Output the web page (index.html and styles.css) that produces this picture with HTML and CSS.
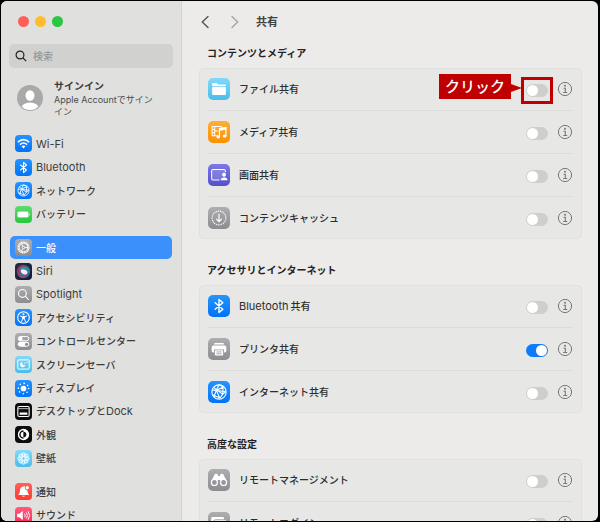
FILE: index.html
```html
<!DOCTYPE html>
<html lang="ja">
<head>
<meta charset="utf-8">
<title>共有</title>
<link rel="stylesheet" href="styles.css">
</head>
<body>
<svg class="defs" aria-hidden="true">
  <symbol id="bluetooth" viewBox="0 0 24 24"><path d="M7.800 8.500l8.400 7-4.200 3.700V4.800l4.200 3.700-8.400 7" fill="none" stroke="#fff" stroke-width="1.500" stroke-linejoin="round" stroke-linecap="round"/></symbol>
  <symbol id="globe" viewBox="0 0 24 24"><g fill="none" stroke="#fff" stroke-width="1.200"><circle cx="12" cy="12" r="7.800"/><path d="M12 4.200l-3 6 4 8.500M4.500 10l4.500.2 8-3.700M6 7l10 7.500 3.500-3M5 15l8 3.500 3-4 .5-8M9 10.200L6.500 17.500M12 4.200l5 2.300M9 10.200l10.500 1.500"/></g></symbol>
  <symbol id="info" viewBox="0 0 16 16"><circle cx="8" cy="8" r="6.600" fill="none" stroke="#777" stroke-width="1"/><circle cx="8" cy="4.800" r="1" fill="#777"/><path d="M6.500 7.200h1.800v4.100M6.200 11.500h4" fill="none" stroke="#777" stroke-width="1.100"/></symbol>
</svg>
<div class="window">
  <aside class="sidebar">
    <div class="lights"><button class="light red" aria-label="閉じる"></button><button class="light yellow" aria-label="しまう"></button><button class="light green-light" aria-label="拡大"></button></div>
    <label class="search">
      <svg viewBox="0 0 12 12"><circle cx="5" cy="5" r="3.900"/><path d="M8 8l3.200 3.200"/></svg>
      <input type="search" placeholder="検索" aria-label="検索">
    </label>
    <a class="account" href="#">
      <svg class="avatar" viewBox="0 0 26 26"><defs><clipPath id="face"><circle cx="13" cy="13" r="12"/></clipPath></defs><circle cx="13" cy="13" r="13" fill="#a9a9a9"/><g clip-path="url(#face)" fill="#fff"><ellipse cx="13" cy="10.500" rx="4.500" ry="5.200"/><ellipse cx="13" cy="23" rx="8.500" ry="5.500"/></g></svg>
      <span><strong>サインイン</strong><small>Apple Accountでサインイン</small></span>
    </a>
    <nav>
      <div class="group group-network">
        <a href="#"><svg class="tile blue" viewBox="0 0 24 24"><path d="M4 10q8-7 16 0M7 13.500q5-4.500 10 0" fill="none" stroke="#fff" stroke-width="2.200"/><path d="M9.300 16q2.700-2.400 5.400 0L12 19z" fill="#fff"/></svg><span class="latin">Wi-Fi</span></a>
        <a href="#"><svg class="tile blue"><use href="#bluetooth"/></svg><span class="latin">Bluetooth</span></a>
        <a href="#"><svg class="tile blue"><use href="#globe"/></svg>ネットワーク</a>
        <a href="#"><svg class="tile green" viewBox="0 0 24 24"><rect x="3" y="7.500" width="16.500" height="9" rx="2.500" fill="#fff" fill-opacity=".55"/><rect x="4" y="8.500" width="14.500" height="7" rx="1.500" fill="#fff"/><path d="M20.500 10q2 2 0 4z" fill="#fff"/></svg>バッテリー</a>
      </div>
      <div class="group group-general">
        <a href="#" class="selected" aria-current="page"><svg class="tile gray" viewBox="0 0 24 24"><circle cx="12" cy="12" r="7.600" fill="none" stroke="#fff" stroke-width="2" stroke-dasharray="1.800 .6"/><g fill="none" stroke="#fff" stroke-width="1.300"><circle cx="12" cy="12" r="6"/><circle cx="12" cy="12" r="1.800"/><path d="M14 12h4M11 10.300L9 6.800M11 13.700l-2 3.500"/></g></svg>一般</a>
        <a href="#"><svg class="tile" viewBox="0 0 24 24"><defs><linearGradient id="siri-bg" x2="1" y2="1"><stop stop-color="#272c3c"/><stop offset="1" stop-color="#161b35"/></linearGradient><linearGradient id="siri-ring" x2="1" y2="1"><stop stop-color="#dc3e7c"/><stop offset=".3" stop-color="#c23b86"/><stop offset=".6" stop-color="#21bac8"/><stop offset="1" stop-color="#3863cc"/></linearGradient></defs><path fill="url(#siri-bg)" d="M0 0h24v24H0z"/><circle cx="12" cy="12" r="9.500" fill="url(#siri-ring)" opacity=".7"/><path d="M4 15q8 5 15-2-3 8-10 7-4-1-5-5" fill="#d12b74" opacity=".8"/><path d="M5 9q5-6 11-3l4 8q-3-6-8-5z" fill="#24aab5" opacity=".7"/><ellipse cx="13" cy="12.500" rx="5" ry="3.200" transform="rotate(25 13 12)" fill="#fff" opacity=".9"/></svg><span class="latin">Siri</span></a>
        <a href="#"><svg class="tile gray" viewBox="0 0 24 24"><g fill="none" stroke="#fff" stroke-width="1.600" stroke-linecap="round"><circle cx="10.500" cy="10.500" r="5.500"/><path d="M14.700 14.700l4.300 4.300"/></g></svg><span class="latin">Spotlight</span></a>
        <a href="#"><svg class="tile blue" viewBox="0 0 24 24"><circle cx="12" cy="12" r="8.200" fill="none" stroke="#fff" stroke-width="1.600"/><circle cx="12" cy="7.400" r="1.400" fill="#fff"/><path d="M7.500 10l3 .8h3l3-.8M10.500 11v3l-1.200 4M13.500 11v3l1.200 4M12 11v3" fill="none" stroke="#fff" stroke-width="1.400" stroke-linecap="round"/></svg>アクセシビリティ</a>
        <a href="#"><svg class="tile gray" viewBox="0 0 24 24"><rect x="4.500" y="5" width="15" height="6" rx="3" fill="none" stroke="#fff" stroke-width="1.400"/><circle cx="8" cy="8" r="2.700" fill="#fff"/><rect x="4" y="12.500" width="16" height="7" rx="3.500" fill="#fff"/><circle cx="16.300" cy="16" r="2.200" fill="#8e8e93"/></svg>コントロールセンター</a>
        <a href="#"><svg class="tile cyan" viewBox="0 0 24 24"><rect x="4" y="5.500" width="16" height="13" rx="1" fill="none" stroke="#fff" stroke-width="1.400"/><path d="M10 8a4 4 0 1 0 5 5q-5 1-5-5z" fill="#fff"/><circle cx="14" cy="10" r="1" fill="#fff"/><circle cx="17" cy="9" r=".8" fill="#fff"/></svg>スクリーンセーバ</a>
        <a href="#"><svg class="tile blue" viewBox="0 0 24 24"><circle cx="12" cy="12" r="4" fill="#fff"/><circle cx="12" cy="12" r="7.300" fill="none" stroke="#fff" stroke-width="2.200" stroke-linecap="round" stroke-dasharray=".1 5.633"/></svg>ディスプレイ</a>
        <a href="#"><svg class="tile black" viewBox="0 0 24 24"><rect x="4" y="5" width="16" height="14" rx="2" fill="none" stroke="#fff" stroke-width="1.500"/><path d="M4.500 8h15" stroke="#fff" stroke-width="1"/><rect x="6.500" y="13.500" width="11" height="3.200" rx=".6" fill="#fff"/></svg><span>デスクトップと<span class="latin">Dock</span></span></a>
        <a href="#"><svg class="tile black" viewBox="0 0 24 24"><circle cx="12" cy="12" r="7" fill="none" stroke="#fff" stroke-width="2"/><path d="M12 5v14a7 7 0 0 0 0-14z" fill="#fff"/><path d="M12 8a4 4 0 0 0 0 8z" fill="#fff"/><path d="M12 8a4 4 0 0 1 0 8z" fill="#111"/></svg>外観</a>
        <a href="#"><svg class="tile cyan" viewBox="0 0 24 24"><g fill="#fff" fill-opacity=".35" stroke="#fff" stroke-width="1.200"><circle cx="12" cy="6.500" r="2.500"/><circle cx="15.900" cy="8.100" r="2.500"/><circle cx="17.500" cy="12" r="2.500"/><circle cx="15.900" cy="15.900" r="2.500"/><circle cx="12" cy="17.500" r="2.500"/><circle cx="8.100" cy="15.900" r="2.500"/><circle cx="6.500" cy="12" r="2.500"/><circle cx="8.100" cy="8.100" r="2.500"/><circle cx="12" cy="12" r="2.300" fill="#5ac8ef" fill-opacity="1"/></g></svg>壁紙</a>
      </div>
      <div class="group group-alerts">
        <a href="#"><svg class="tile rose" viewBox="0 0 24 24"><path d="M4.500 17q2.500-2.300 2.500-6 0-5.500 5-6 1.300-2 2.300.4 3.200 1.500 3.200 5.600 0 3.500 2.500 6z" fill="#fff"/><path d="M9.800 18h4.400q-2 3-4.400 0" fill="#fff"/><circle cx="17.300" cy="6.700" r="3" fill="#fff" stroke="#ff453a" stroke-width="1.200"/></svg>通知</a>
        <a href="#"><svg class="tile pink" viewBox="0 0 24 24"><path d="M3 9.500h3L11 5.500v13L6 14.500H3z" fill="#fff"/><path d="M13.500 9.500q1.800 2.500 0 5M16 7.700q3 4.300 0 8.600M18.500 6q4.200 6 0 12" fill="none" stroke="#fff" stroke-width="1.300"/></svg>サウンド</a>
      </div>
    </nav>
  </aside>
  <main>
    <header>
      <button class="arrow" aria-label="戻る"><svg viewBox="0 0 8 14"><path d="M7 1.500L1.300 7 7 12.500"/></svg></button>
      <button class="arrow next" aria-label="進む" disabled><svg viewBox="0 0 8 14"><path d="M1 1.500L6.700 7 1 12.500"/></svg></button>
      <h1>共有</h1>
    </header>
    <section>
      <h2>コンテンツとメディア</h2>
      <ul class="card">
        <li><svg class="tile cyan" viewBox="0 0 24 24"><path d="M4.500 8V6.500q0-1 1-1h4l1.500 1.500h7.500q1 0 1 1v.7h-15z" fill="#fff"/><rect x="4.500" y="9.600" width="15" height="9" rx="1.300" fill="#fff"/></svg><label for="file">ファイル共有</label>
          <span class="marked"><input class="switch" id="file" type="checkbox" role="switch"><span class="callout">クリック</span></span>
          <button class="info" aria-label="詳細"><svg><use href="#info"/></svg></button></li>
        <li><svg class="tile orange" viewBox="0 0 24 24"><path d="M11 16H4.500V6h10v1.500M7.300 6v10M4.500 9.300h2.800M4.500 12.700h2.800M7.300 11h4" fill="none" stroke="#fff" stroke-width="1.100"/><path d="M12.500 17V8.500L19.500 7v9.300" fill="none" stroke="#fff" stroke-width="1.300"/><path d="M12 8.300L20 6.500v2.700l-8 1.800z" fill="#fff"/><ellipse cx="11.200" cy="17.300" rx="2.100" ry="1.700" fill="#fff"/><ellipse cx="18.200" cy="16.300" rx="2.100" ry="1.700" fill="#fff"/></svg><label for="media">メディア共有</label>
          <input class="switch" id="media" type="checkbox" role="switch">
          <button class="info" aria-label="詳細"><svg><use href="#info"/></svg></button></li>
        <li><svg class="tile indigo" viewBox="0 0 24 24"><path d="M12.500 17.500h-7q-1.500 0-1.500-1.500V7.500Q4 6 5.500 6h12Q19 6 19 7.500V9" fill="#fff" fill-opacity=".15" stroke="#fff" stroke-width="1.100"/><circle cx="17.500" cy="11.700" r="2.100" fill="#fff"/><path d="M13.800 17.800q0-2.800 3-3.200h1.500q3 .4 3 3.200z" fill="#fff"/></svg><label for="screen">画面共有</label>
          <input class="switch" id="screen" type="checkbox" role="switch">
          <button class="info" aria-label="詳細"><svg><use href="#info"/></svg></button></li>
        <li><svg class="tile gray" viewBox="0 0 24 24"><circle cx="12" cy="12" r="7.500" fill="none" stroke="#fff" stroke-width="1.200" stroke-dasharray="1.200 .8"/><path d="M12 8v8M9.300 13.300L12 16l2.700-2.700" fill="none" stroke="#fff" stroke-width="1.300" stroke-linecap="round"/></svg><label for="cache">コンテンツキャッシュ</label>
          <input class="switch" id="cache" type="checkbox" role="switch">
          <button class="info" aria-label="詳細"><svg><use href="#info"/></svg></button></li>
      </ul>
    </section>
    <section>
      <h2>アクセサリとインターネット</h2>
      <ul class="card">
        <li><svg class="tile blue"><use href="#bluetooth"/></svg><label for="bt"><span class="latin">Bluetooth</span><span class="suffix">共有</span></label>
          <input class="switch" id="bt" type="checkbox" role="switch">
          <button class="info" aria-label="詳細"><svg><use href="#info"/></svg></button></li>
        <li><svg class="tile gray" viewBox="0 0 24 24"><path d="M7.500 5.500h9q.8 0 .8 1v.7H6.700v-.7q0-1 .8-1" fill="#fff"/><path d="M6 8.200h12q2 0 2 2v4q0 1.500-1.700 1.500h-.8v-3.200h-11v3.200h-.8Q4 15.700 4 14.200v-4q0-2 2-2" fill="#fff"/><rect x="7.500" y="13.300" width="9" height="5.700" rx=".7" fill="#fff"/><path d="M9.200 15.200h5.600M9.200 17.200h5.600" stroke="#96969a" stroke-width=".9"/></svg><label for="printer">プリンタ共有</label>
          <input class="switch" id="printer" type="checkbox" role="switch" checked>
          <button class="info" aria-label="詳細"><svg><use href="#info"/></svg></button></li>
        <li><svg class="tile blue"><use href="#globe"/></svg><label for="internet">インターネット共有</label>
          <input class="switch" id="internet" type="checkbox" role="switch">
          <button class="info" aria-label="詳細"><svg><use href="#info"/></svg></button></li>
      </ul>
    </section>
    <section>
      <h2>高度な設定</h2>
      <ul class="card">
        <li><svg class="tile gray" viewBox="0 0 24 24"><path d="M7.500 5.500q2-1 3.200.5l.3 1.500h2l.3-1.500q1.200-1.500 3.200-.5l4.300 8.500h-7v-2h-3.600v2h-7z" fill="#fff"/><g fill="#96969a" stroke="#fff" stroke-width="1.300"><circle cx="7" cy="14.700" r="3.300"/><circle cx="17" cy="14.700" r="3.300"/></g></svg><label for="manage">リモートマネージメント</label>
          <input class="switch" id="manage" type="checkbox" role="switch">
          <button class="info" aria-label="詳細"><svg><use href="#info"/></svg></button></li>
        <li><svg class="tile gray" viewBox="0 0 24 24"><rect x="3.500" y="5.500" width="14" height="11" rx="1.500" fill="#fff"/><rect x="6.500" y="8.500" width="14" height="10.500" rx="1.500" fill="#fff" stroke="#96969a"/></svg><label for="login">リモートログイン</label>
          <input class="switch" id="login" type="checkbox" role="switch">
          <button class="info" aria-label="詳細"><svg><use href="#info"/></svg></button></li>
      </ul>
    </section>
  </main>
</div>
</body>
</html>
```
FILE: styles.css
```css
* { box-sizing: border-box; }

body {
  margin: 0;
  height: 100vh;
  padding: 1px 2px 1px 1px;
  background: #000;
  color: #2c2c2b;
  font: 500 10px/16px Inter, "Noto Sans CJK JP", sans-serif;
  overflow: hidden;
}

a { color: inherit; text-decoration: none; }
button { border: 0; padding: 0; background: none; font: inherit; color: inherit; }
.defs { position: absolute; width: 0; height: 0; }
.latin { font-size: 11px; font-weight: 400; }
.suffix { margin-left: 2px; }

.window {
  display: grid;
  grid-template-columns: 181px 1fr;
  height: 100%;
  overflow: hidden;
  border-radius: 6px;
  background: #ecebea;
}

/* Sidebar */
.sidebar {
  min-height: 0;
  overflow: hidden;
  padding: 0 8px;
  background: #e0e0df;
  border-right: 1px solid #d3d3d2;
  color: #3c3c3b;
}

.lights { display: flex; gap: 6px; padding: 15px 0 17px 9px; }
.light { width: 11px; height: 11px; border-radius: 50%; }
.red { background: #ff5f57; }
.yellow { background: #febc2e; }
.green-light { background: #28c840; }

.search {
  display: flex;
  align-items: center;
  gap: 6px;
  height: 24px;
  padding: 0 6px;
  border-radius: 5px;
  background: #d1d1d0;
}
.search svg { flex: none; width: 12px; height: 12px; fill: none; stroke: #222; stroke-width: 1.2; }
.search input { width: 100%; min-width: 0; padding: 0; border: 0; outline: 0; background: none; font: inherit; }
.search input::placeholder { color: #979796; opacity: 1; }

.account { display: flex; gap: 11px; padding: 10px 16px 14px 8px; }
.account span { flex: 1; }
.avatar { flex: none; width: 26px; height: 26px; margin-top: 7px; }
.account strong, .account small { display: block; }
.account strong { line-height: 16px; font-weight: 700; }
.account small { font-size: 9px; line-height: 12px; font-weight: 400; color: #4a4a49; }

.group { display: grid; grid-auto-rows: 1fr; margin: 0 1px 10px; }
.group-network { height: 94px; }
.group-general { height: 234px; }
.group-alerts { height: 47px; }
.group a {
  display: flex;
  align-items: center;
  gap: 4px;
  padding: 0 5px;
  border-radius: 5px;
  white-space: nowrap;
}
.group .selected { background: #3b90fb; color: #fff; }

.tile { flex: none; width: 17px; height: 17px; border-radius: 4px; }
.blue { background: linear-gradient(#2793ff, #0074f8); }
.green { background: linear-gradient(#5edb70, #28c63f); }
.gray { background: linear-gradient(#aeaeb1, #8c8c91); }
.cyan { background: linear-gradient(#82d8fa, #4abdec); }
.black { background: #0c0c0c; }
.rose { background: linear-gradient(#ff6259, #ff3930); }
.pink { background: linear-gradient(#ff5b7e, #fb2c59); }
.orange { background: linear-gradient(#ffae34, #fc9000); }
.indigo { background: linear-gradient(#7d78e6, #5450cc); }

/* Content */
main { min-width: 0; min-height: 0; overflow: hidden; padding: 0 16px 0 17px; }

header { display: flex; align-items: center; height: 44px; padding: 0 0 3px 2px; }
.arrow { width: 8px; height: 14px; margin-right: 22px; }
.arrow svg { display: block; width: 8px; height: 14px; fill: none; stroke: #555; stroke-width: 1.4; stroke-linecap: round; }
.next { margin-right: 17px; }
.next svg { stroke: #a5a5a4; }
h1 { margin: 0; font-size: 11px; font-weight: 700; color: #414140; }

section { margin-bottom: 23px; }
h2 { margin: 0 8px 7px; font-size: 10px; line-height: 16px; font-weight: 700; color: #222; }

.card {
  margin: 0;
  padding: 0 9px;
  list-style: none;
  border-radius: 5px;
  background: #e7e7e5;
  box-shadow: inset 0 0 0 1px #e0e0de;
}
.card li { display: flex; align-items: center; height: 42px; }
.card li + li { height: 43px; border-top: 1px solid #dcdcda; }
.card .tile { width: 22px; height: 22px; border-radius: 5px; margin-right: 9px; }
.card label { flex: 1; }

.switch {
  appearance: none;
  display: block;
  width: 22px;
  height: 13px;
  margin: 2px 0 0;
  padding: 1px;
  border-radius: 7px;
  background: #cececd;
}
.switch::before {
  content: "";
  display: block;
  width: 11px;
  height: 11px;
  border-radius: 50%;
  background: #fff;
}
.switch:checked { background: #0f7bfa; }
.switch:checked::before { margin-left: auto; }

.info { width: 16px; height: 16px; margin-left: 9px; }
.info svg { display: block; width: 16px; height: 16px; }

/* Highlighted switch and its pointer label */
.marked { position: relative; }
.marked::after {
  content: "";
  position: absolute;
  inset: -5px -5px -7px;
  border: 3px solid #c00000;
}
.callout {
  position: absolute;
  right: 37px;
  top: -8px;
  width: 72px;
  background: #c00000;
  color: #fff;
  font-size: 15px;
  line-height: 25px;
  text-align: center;
  white-space: nowrap;
}
.callout::after {
  content: "";
  position: absolute;
  left: 100%;
  top: 10px;
  border-left: 11px solid #c00000;
  border-top: 4px solid transparent;
  border-bottom: 4px solid transparent;
}
```
